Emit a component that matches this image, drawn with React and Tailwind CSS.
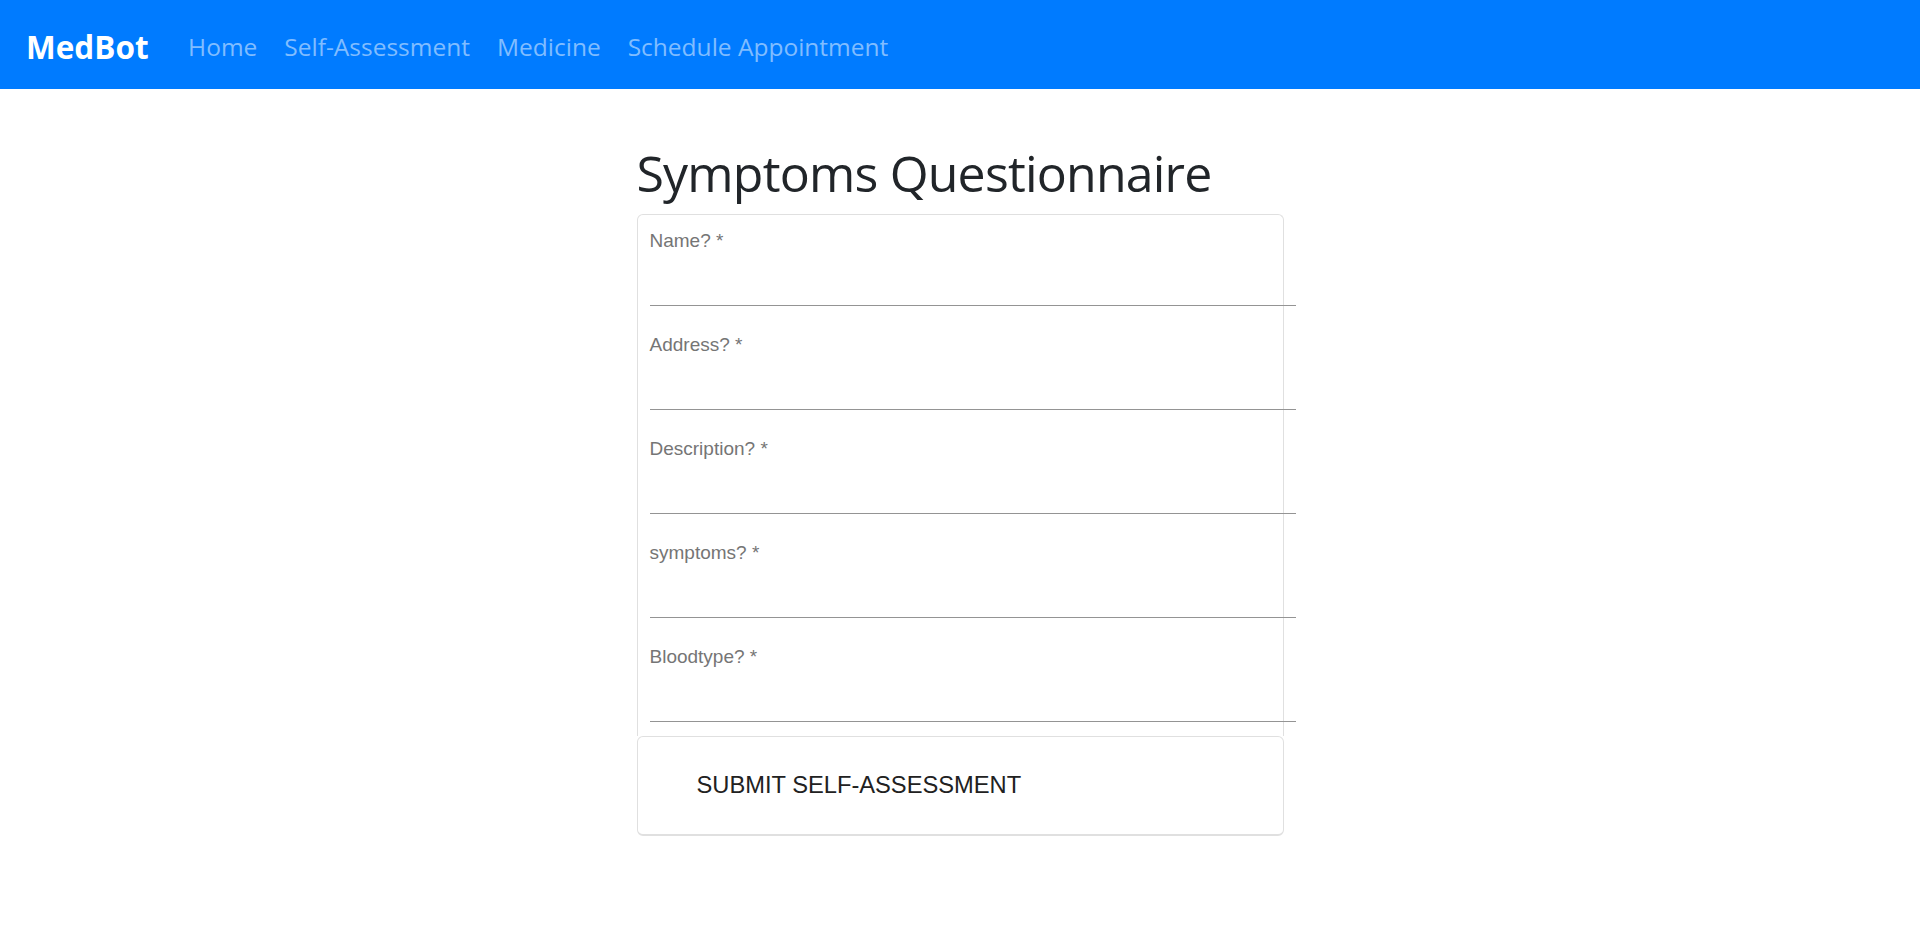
import React from 'react';

const FIELDS = ['Name?', 'Address?', 'Description?', 'symptoms?', 'Bloodtype?'];

const NAV_LINKS = ['Home', 'Self-Assessment', 'Medicine', 'Schedule Appointment'];

const Navbar = () => (
    <nav className="h-[89px] bg-[#007bff] flex items-center pt-[5px] px-[26px] font-['Open_Sans',sans-serif]">
        <span className="text-white font-bold text-[31.5px] mr-[26px]">MedBot</span>
        <div className="flex items-center">
            {NAV_LINKS.map((link) => (
                <a key={link} className="px-[13.5px] text-[24.5px] text-[#80bdff]">{link}</a>
            ))}
        </div>
    </nav>
);

const Field = ({ label, first }) => (
    <div className={`${first ? 'pt-[14px]' : 'pt-[27px]'} w-[646px]`}>
        <label className="block text-[19px] leading-[23px] text-[#757575] font-['Liberation_Sans',Arial,sans-serif]">
            {label} *
        </label>
        <div className="h-[54px] border-b border-[#949494]" />
    </div>
);

export default function App() {
    return (
        <div className="min-h-screen bg-white">
            <Navbar />
            <div className="w-[647px] mx-auto">
                <h1 className="mt-[54px] mb-[11px] text-[50px] leading-[60px] tracking-[-0.8px] text-[#212529] font-['Open_Sans',sans-serif]">
                    Symptoms Questionnaire
                </h1>
                {/* questionnaire card, its bottom edge is hidden under the submit card */}
                <div className="border border-b-0 border-[#e0e0e0] rounded-t-[6px] pl-3 pb-[14px]">
                    {FIELDS.map((f, i) => (
                        <Field key={f} label={f} first={i === 0} />
                    ))}
                </div>
                <div className="h-[100px] border border-[#e0e0e0] border-b-2 rounded-[6px] flex items-center pl-[59px]">
                    <button className="text-[23.7px] text-[#212121] font-['Liberation_Sans',Arial,sans-serif] uppercase">
                        Submit Self-Assessment
                    </button>
                </div>
            </div>
        </div>
    );
}
